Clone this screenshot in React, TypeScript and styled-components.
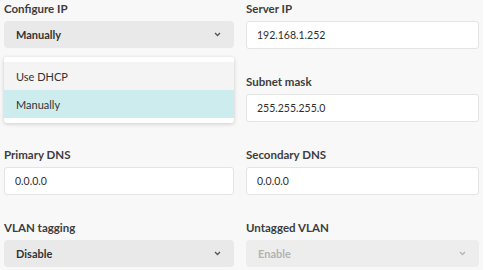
import React from "react";
import styled, { createGlobalStyle } from "styled-components";

const Global = createGlobalStyle`
body {
    margin: 0;
    background: #ffffff;
    font-family: Lato, "Open Sans", sans-serif;
}
`

const Chevron = ({ muted }: { muted?: boolean }) => (
    <svg width="7" height="5" viewBox="0 0 7 5">
        <polyline points="1,1 3.5,3.5 6,1" fill="none"
            stroke={muted ? "#b5b5b5" : "#555"} strokeWidth="1.3" />
    </svg>
)

const App = () => {
    return (
        <>
            <Global />
            <Panel>
                <Field>
                    <Label>Configure IP</Label>
                    <Select>
                        <span>Manually</span>
                        <Chevron />
                    </Select>
                    <Menu>
                        <Option>Use DHCP</Option>
                        <Option selected>Manually</Option>
                    </Menu>
                </Field>
                <Field>
                    <Label>Server IP</Label>
                    <Input defaultValue="192.168.1.252" />
                </Field>
                <Field />
                <Field>
                    <Label>Subnet mask</Label>
                    <Input defaultValue="255.255.255.0" />
                </Field>
                <Field>
                    <Label>Primary DNS</Label>
                    <Input defaultValue="0.0.0.0" />
                </Field>
                <Field>
                    <Label>Secondary DNS</Label>
                    <Input defaultValue="0.0.0.0" />
                </Field>
                <Field>
                    <Label>VLAN tagging</Label>
                    <Select>
                        <span>Disable</span>
                        <Chevron />
                    </Select>
                </Field>
                <Field>
                    <Label>Untagged VLAN</Label>
                    <Select disabled>
                        <span>Enable</span>
                        <Chevron muted />
                    </Select>
                </Field>
            </Panel>
        </>
    )
}

const Panel = styled.div`
height: 270px;
padding: 2px 4px 0 4px;
box-sizing: border-box;
width: 483px;
background: #f8f8f8;
display: grid;
grid-template-columns: 230px 233px;
grid-auto-rows: 47px;
column-gap: 12px;
row-gap: 26px;
overflow: hidden;
`

const Field = styled.div`
position: relative; // 메뉴 오버레이 위함
display: flex;
flex-direction: column;
`

const Label = styled.label`
font-size: 11.5px;
font-weight: bold;
color: #3d3d3d;
line-height: 14px;
margin-bottom: 5px;
`

const Input = styled.input`
height: 28px;
box-sizing: border-box;
border: 1px solid #e4e4e4;
border-radius: 3px;
background: #fff;
padding: 0 9px 0 10px;
font-family: Lato, sans-serif;
font-size: 10.5px;
color: #2e2e2e;
outline: none;
`

const Select = styled.div<{ disabled?: boolean }>`
height: 27px;
box-sizing: border-box;
border-radius: 4px;
background: ${({ disabled }) => disabled ? "#ededed" : "#e9e9e9"};
display: flex;
align-items: center;
justify-content: space-between;
padding: 0 13px 0 12px;
font-size: 11px;
font-weight: bold;
color: ${({ disabled }) => disabled ? "#b3b3b3" : "#333"};
`

const Menu = styled.div`
position: absolute;
top: 55px;
left: 0;
right: 0;
background: #fff;
border-radius: 3px;
box-shadow: 0 1px 4px rgba(0, 0, 0, 0.18);
padding: 5px 0 5px 0;
z-index: 2;
`

const Option = styled.div<{ selected?: boolean }>`
height: 28px;
display: flex;
align-items: center;
padding: 0 12px;
font-size: 11px;
color: #333;
background: ${({ selected }) => selected ? "#cdeced" : "#f4f4f4"};
`

export default App;
